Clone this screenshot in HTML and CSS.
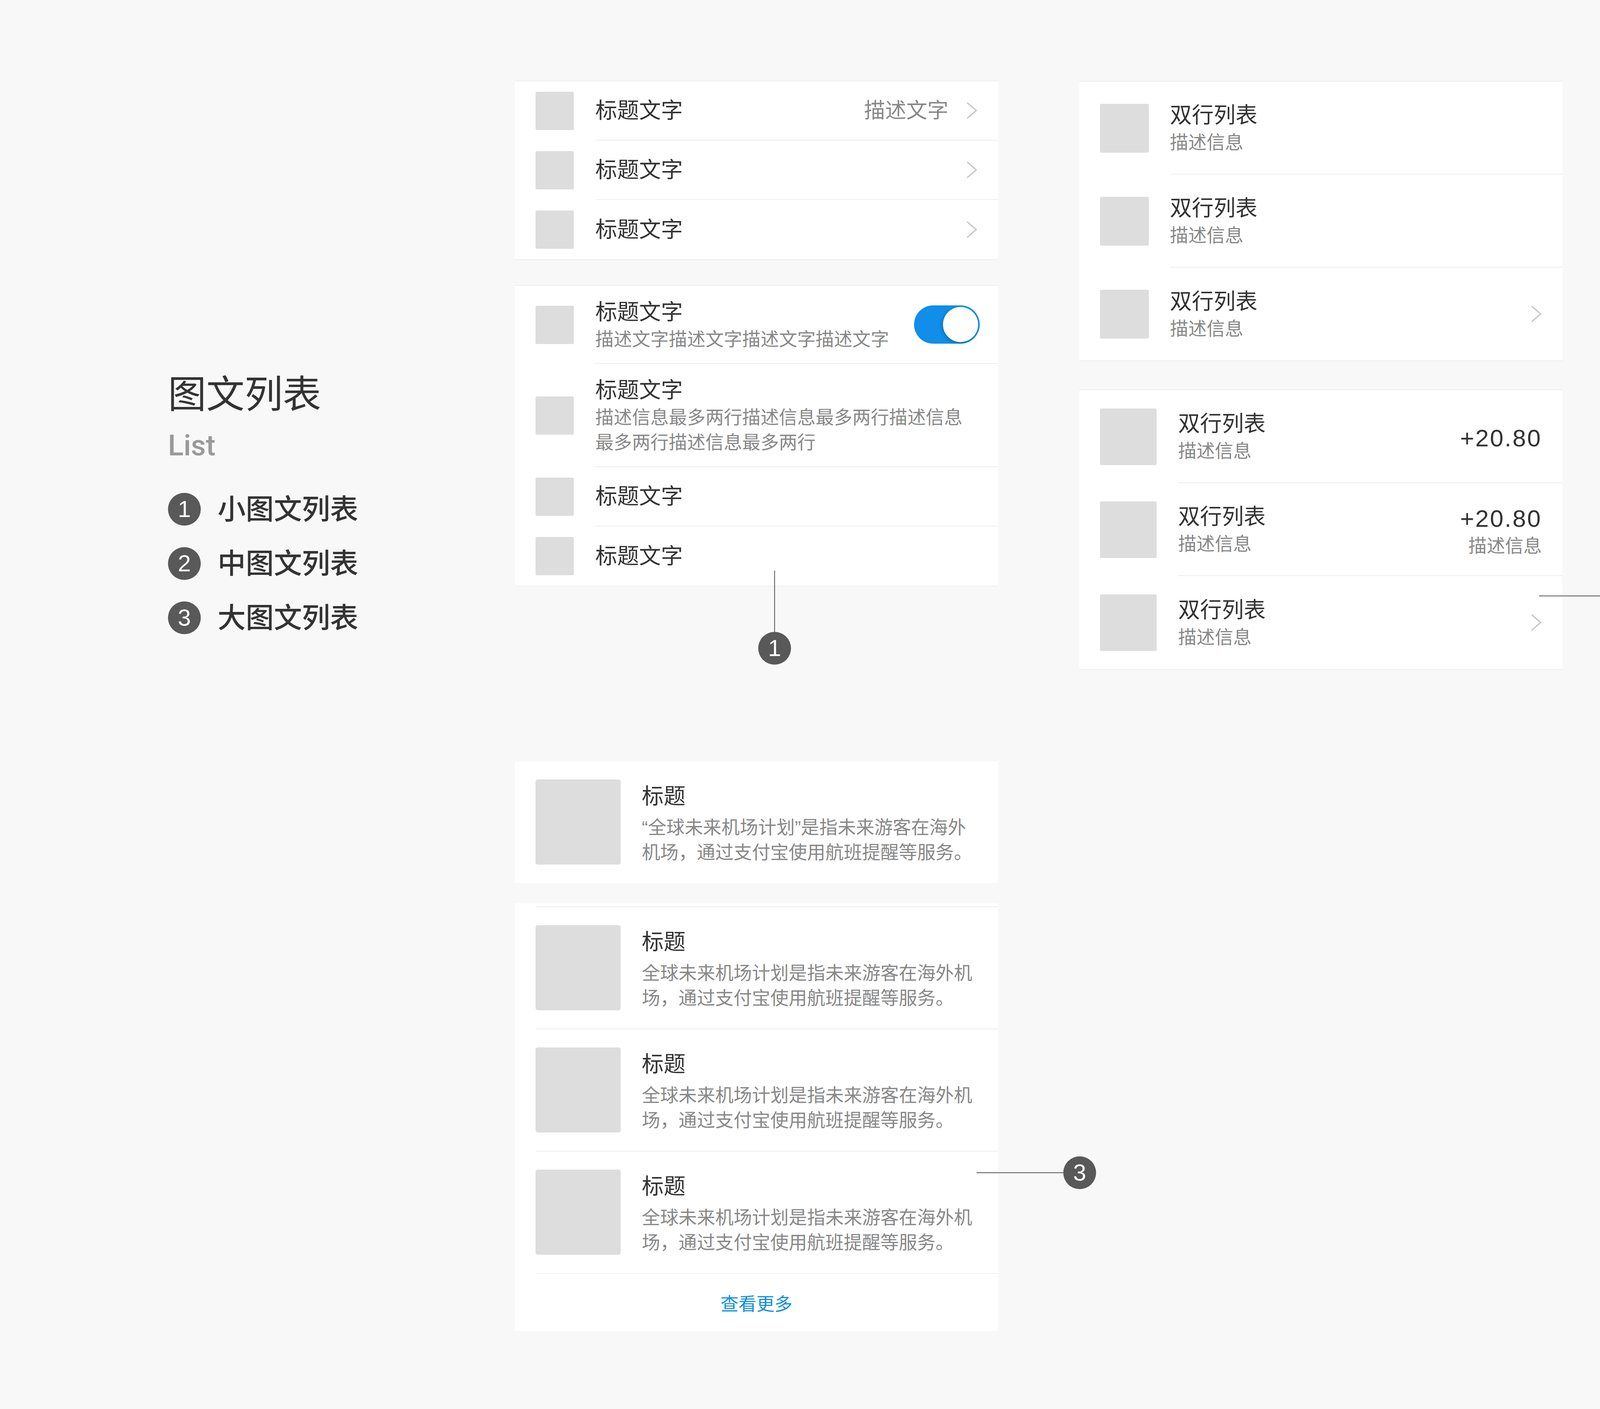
FILE: index.html
```html
<!DOCTYPE html>
<html lang="zh-CN">
<head>
    <meta charset="UTF-8">
    <title>图文列表 List</title>
    <link rel="stylesheet" href="styles.css">
</head>
<body>
    <div class="page">
        <section class="intro">
            <h1>图文列表</h1>
            <div class="en">List</div>
            <ol class="toc">
                <li><span class="num">1</span>小图文列表</li>
                <li><span class="num">2</span>中图文列表</li>
                <li><span class="num">3</span>大图文列表</li>
            </ol>
        </section>

        <section class="col">
            <!-- 小图文列表 -->
            <div class="list">
                <div class="item">
                    <div class="thumb"></div>
                    <div class="line">
                        <div class="content"><div class="title">标题文字</div></div>
                        <div class="extra">描述文字</div>
                        <svg class="arrow" width="28" height="44" viewBox="0 0 28 44"><path d="M2 2 L25 22 L2 42" /></svg>
                    </div>
                </div>
                <div class="item">
                    <div class="thumb"></div>
                    <div class="line">
                        <div class="content"><div class="title">标题文字</div></div>
                        <svg class="arrow" width="28" height="44" viewBox="0 0 28 44"><path d="M2 2 L25 22 L2 42" /></svg>
                    </div>
                </div>
                <div class="item">
                    <div class="thumb"></div>
                    <div class="line">
                        <div class="content"><div class="title">标题文字</div></div>
                        <svg class="arrow" width="28" height="44" viewBox="0 0 28 44"><path d="M2 2 L25 22 L2 42" /></svg>
                    </div>
                </div>
            </div>

            <div class="list list-second">
                <div class="item">
                    <div class="thumb"></div>
                    <div class="line line-switch">
                        <div class="content">
                            <div class="title">标题文字</div>
                            <div class="brief">描述文字描述文字描述文字描述文字</div>
                        </div>
                        <div class="switch"><i></i></div>
                    </div>
                </div>
                <div class="item">
                    <div class="thumb"></div>
                    <div class="line">
                        <div class="content">
                            <div class="title">标题文字</div>
                            <div class="brief">描述信息最多两行描述信息最多两行描述信息最多两行描述信息最多两行</div>
                        </div>
                    </div>
                </div>
                <div class="item">
                    <div class="thumb"></div>
                    <div class="line">
                        <div class="content"><div class="title">标题文字</div></div>
                    </div>
                </div>
                <div class="item">
                    <div class="thumb"></div>
                    <div class="line">
                        <div class="content"><div class="title">标题文字</div></div>
                    </div>
                </div>
            </div>

            <!-- 大图文列表 -->
            <div class="card">
                <div class="media">
                    <div class="thumb"></div>
                    <div class="content">
                        <div class="title">标题</div>
                        <div class="brief">“全球未来机场计划”是指未来游客在海外机场，通过支付宝使用航班提醒等服务。</div>
                    </div>
                </div>
            </div>

            <div class="card feed">
                <div class="media">
                    <div class="thumb"></div>
                    <div class="content">
                        <div class="title">标题</div>
                        <div class="brief">全球未来机场计划是指未来游客在海外机场，通过支付宝使用航班提醒等服务。</div>
                    </div>
                </div>
                <div class="media">
                    <div class="thumb"></div>
                    <div class="content">
                        <div class="title">标题</div>
                        <div class="brief">全球未来机场计划是指未来游客在海外机场，通过支付宝使用航班提醒等服务。</div>
                    </div>
                </div>
                <div class="media">
                    <div class="thumb"></div>
                    <div class="content">
                        <div class="title">标题</div>
                        <div class="brief">全球未来机场计划是指未来游客在海外机场，通过支付宝使用航班提醒等服务。</div>
                    </div>
                </div>
                <div class="more">查看更多</div>
            </div>
        </section>

        <!-- 中图文列表 -->
        <section class="col col-right">
            <div class="list list-md">
                <div class="item">
                    <div class="thumb"></div>
                    <div class="line">
                        <div class="content">
                            <div class="title">双行列表</div>
                            <div class="brief">描述信息</div>
                        </div>
                    </div>
                </div>
                <div class="item">
                    <div class="thumb"></div>
                    <div class="line">
                        <div class="content">
                            <div class="title">双行列表</div>
                            <div class="brief">描述信息</div>
                        </div>
                    </div>
                </div>
                <div class="item">
                    <div class="thumb"></div>
                    <div class="line">
                        <div class="content">
                            <div class="title">双行列表</div>
                            <div class="brief">描述信息</div>
                        </div>
                        <svg class="arrow" width="28" height="44" viewBox="0 0 28 44"><path d="M2 2 L25 22 L2 42" /></svg>
                    </div>
                </div>
            </div>

            <div class="list list-lg">
                <div class="item">
                    <div class="thumb"></div>
                    <div class="line">
                        <div class="content">
                            <div class="title">双行列表</div>
                            <div class="brief">描述信息</div>
                        </div>
                        <div class="amount"><div class="value">+20.80</div></div>
                    </div>
                </div>
                <div class="item">
                    <div class="thumb"></div>
                    <div class="line">
                        <div class="content">
                            <div class="title">双行列表</div>
                            <div class="brief">描述信息</div>
                        </div>
                        <div class="amount">
                            <div class="value">+20.80</div>
                            <div class="brief">描述信息</div>
                        </div>
                    </div>
                </div>
                <div class="item">
                    <div class="thumb"></div>
                    <div class="line">
                        <div class="content">
                            <div class="title">双行列表</div>
                            <div class="brief">描述信息</div>
                        </div>
                        <svg class="arrow" width="28" height="44" viewBox="0 0 28 44"><path d="M2 2 L25 22 L2 42" /></svg>
                    </div>
                </div>
            </div>
        </section>

        <!-- 标注 -->
        <div class="callout callout-1"><i class="stem"></i><span class="num">1</span></div>
        <div class="callout callout-2"><i class="stem"></i><span class="num">2</span></div>
        <div class="callout callout-3"><i class="stem"></i><span class="num">3</span></div>
    </div>
</body>
</html>
```

FILE: styles.css
```css
body {
    margin: 0;
    background: #f8f8f8;
    font-family: "Liberation Sans", "Noto Sans CJK SC", sans-serif;
    color: #333;
}
.page {
    position: relative;
    width: 4500px;
    height: 3608px;
    box-sizing: border-box;
    padding: 206px 0 0 430px;
    display: flex;
    align-items: flex-start;
}

/* 左侧说明 */
.intro {
    width: 888px;
    flex-shrink: 0;
    padding-top: 755px;
}
.intro h1 {
    margin: 0;
    font-size: 98px;
    line-height: 1;
    font-weight: 400;
    color: #333;
}
.intro .en {
    margin-top: 45px;
    font-family: Roboto, "Liberation Sans", sans-serif;
    font-weight: 500;
    font-size: 74px;
    line-height: 1;
    color: #999;
}
.toc {
    list-style: none;
    margin: 84px 0 0;
    padding: 0;
    display: flex;
    flex-direction: column;
    gap: 55px;
}
.toc li {
    display: flex;
    align-items: center;
    font-size: 72px;
    line-height: 1;
    font-weight: 500;
    color: #333;
}
.num {
    width: 84px;
    height: 84px;
    flex-shrink: 0;
    border-radius: 50%;
    background: #595959;
    color: #fff;
    font-family: "Liberation Sans", sans-serif;
    font-size: 60px;
    font-weight: 400;
    line-height: 1;
    display: flex;
    align-items: center;
    justify-content: center;
}
.toc .num {
    margin-right: 43px;
}

/* 列 */
.col {
    width: 1237px;
    flex-shrink: 0;
}
.col-right {
    margin-left: 208px;
    padding-top: 1px;
}

/* 列表 */
.list {
    background: #fff;
    border-top: 2px solid #eee;
    border-bottom: 2px solid #eee;
}
.list-second {
    margin-top: 64px;
}
.item {
    display: flex;
    align-items: stretch;
    padding-left: 53px;
}
.thumb {
    flex-shrink: 0;
    align-self: center;
    width: 98px;
    height: 98px;
    margin-right: 55px;
    border-radius: 4px;
    background: #ddd;
}
.line {
    flex: 1;
    min-width: 0;
    min-height: 152px;
    box-sizing: border-box;
    display: flex;
    align-items: center;
    padding: 29px 53px 29px 0;
    border-bottom: 2px solid #eee;
}
.item:last-child .line {
    border-bottom: 0;
}
.line-switch {
    padding-right: 47px;
}
.content {
    flex: 1;
    min-width: 0;
}
.title {
    font-size: 56px;
    line-height: 76px;
    color: #333;
}
.brief {
    font-size: 47px;
    line-height: 64px;
    color: #888;
}
.extra {
    font-size: 54px;
    line-height: 76px;
    color: #888;
    margin-right: 46px;
}
.arrow {
    flex-shrink: 0;
    display: block;
}
.arrow path {
    fill: none;
    stroke: #c7c7cc;
    stroke-width: 3.5;
}

/* 开关 */
.switch {
    flex-shrink: 0;
    width: 168px;
    height: 98px;
    box-sizing: border-box;
    padding: 0 4px;
    border-radius: 49px;
    background: #108ee9;
    display: flex;
    align-items: center;
    justify-content: flex-end;
}
.switch i {
    width: 90px;
    height: 90px;
    border-radius: 50%;
    background: #fff;
    box-shadow: -2px 3px 8px rgba(0,0,0,0.25);
}

/* 中图 */
.list-md .line,
.list-lg .line {
    min-height: 238px;
}
.list-md .thumb {
    width: 125px;
    height: 125px;
    margin-right: 54px;
}
.list-lg {
    margin-top: 72px;
}
.list-lg .thumb {
    width: 145px;
    height: 145px;
}
.amount {
    text-align: right;
    margin-top: 10px;
}
.amount .value {
    font-size: 62px;
    line-height: 76px;
    letter-spacing: 3px;
    color: #333;
}

/* 大图 */
.card {
    background: #fff;
    margin-top: 448px;
}
.card.feed {
    margin-top: 52px;
    padding-top: 8px;
}
.media {
    display: flex;
    align-items: flex-start;
    margin-left: 53px;
    padding: 46px 53px 46px 0;
}
.feed .media {
    border-top: 2px solid #eee;
}
.media .thumb {
    align-self: flex-start;
    width: 218px;
    height: 218px;
    margin-right: 54px;
    border-radius: 6px;
}
.media .content {
    padding-top: 5px;
}
.media .brief {
    margin-top: 10px;
}
.more {
    margin-left: 53px;
    padding-right: 53px;
    height: 146px;
    border-top: 2px solid #eee;
    display: flex;
    align-items: center;
    justify-content: center;
    font-size: 46px;
    color: #108ee9;
}

/* 标注 */
.callout {
    position: absolute;
    display: flex;
    align-items: center;
}
.stem {
    display: block;
    background: #555;
}
.callout-1 {
    left: 1941px;
    top: 1461px;
    flex-direction: column;
}
.callout-1 .stem {
    width: 2px;
    height: 157px;
}
.callout-2 {
    left: 3940px;
    top: 1484px;
}
.callout-3 {
    left: 2500px;
    top: 2961px;
}
.callout-2 .stem,
.callout-3 .stem {
    width: 222px;
    height: 2px;
}
```
